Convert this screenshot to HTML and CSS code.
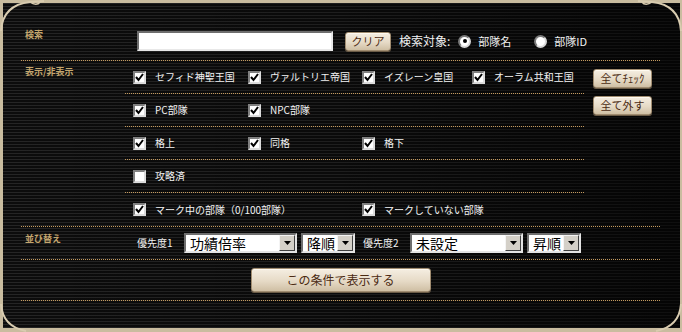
FILE: index.html
```html
<!DOCTYPE html>
<html lang="ja">
<head>
<meta charset="utf-8">
<title>検索</title>
<link rel="stylesheet" href="styles.css">
</head>
<body>
<div class="frame">
  <svg class="corner corner-tl" width="48" height="32" viewBox="0 0 48 32"><path d="M1 31 C2 14 12 4 30 2 L44 1" fill="none" stroke="#d9ccb0" stroke-width="2"/><path d="M30 2 C34 5 38 5 40 2" fill="none" stroke="#d9ccb0" stroke-width="1.5"/></svg>
  <svg class="corner corner-tr" width="48" height="32" viewBox="0 0 48 32"><path d="M47 31 C46 14 36 4 18 2 L4 1" fill="none" stroke="#d9ccb0" stroke-width="2"/><path d="M18 2 C14 5 10 5 8 2" fill="none" stroke="#d9ccb0" stroke-width="1.5"/></svg>
  <svg class="corner corner-bl" width="30" height="30" viewBox="0 0 30 30"><path d="M1 2 C2 16 10 26 26 29" fill="none" stroke="#d9ccb0" stroke-width="2"/></svg>
  <svg class="corner corner-br" width="30" height="30" viewBox="0 0 30 30"><path d="M29 2 C28 16 20 26 4 29" fill="none" stroke="#d9ccb0" stroke-width="2"/></svg>

  <section class="sec sec-search">
    <div class="sec-label">検索</div>
    <div class="search-body">
      <input class="text-input" type="text">
      <button class="btn btn-clear">クリア</button>
      <span class="target-label">検索対象:</span>
      <span class="radio"><span class="radio-dot on"></span>部隊名</span>
      <span class="radio radio-2"><span class="radio-dot"></span>部隊ID</span>
    </div>
  </section>

  <section class="sec sec-filter">
    <div class="sec-label">表示/非表示</div>
    <div class="rows">
      <div class="row">
        <span class="cb"><span class="box on"><svg width="9" height="9" viewBox="0 0 9 9"><path d="M1 4 L3.5 7 L8 1" fill="none" stroke="#000" stroke-width="2"/></svg></span>セフィド神聖王国</span>
        <span class="cb"><span class="box on"><svg width="9" height="9" viewBox="0 0 9 9"><path d="M1 4 L3.5 7 L8 1" fill="none" stroke="#000" stroke-width="2"/></svg></span>ヴァルトリエ帝国</span>
        <span class="cb"><span class="box on"><svg width="9" height="9" viewBox="0 0 9 9"><path d="M1 4 L3.5 7 L8 1" fill="none" stroke="#000" stroke-width="2"/></svg></span>イズレーン皇国</span>
        <span class="cb"><span class="box on"><svg width="9" height="9" viewBox="0 0 9 9"><path d="M1 4 L3.5 7 L8 1" fill="none" stroke="#000" stroke-width="2"/></svg></span>オーラム共和王国</span>
      </div>
      <div class="row">
        <span class="cb"><span class="box on"><svg width="9" height="9" viewBox="0 0 9 9"><path d="M1 4 L3.5 7 L8 1" fill="none" stroke="#000" stroke-width="2"/></svg></span>PC部隊</span>
        <span class="cb"><span class="box on"><svg width="9" height="9" viewBox="0 0 9 9"><path d="M1 4 L3.5 7 L8 1" fill="none" stroke="#000" stroke-width="2"/></svg></span>NPC部隊</span>
      </div>
      <div class="row">
        <span class="cb"><span class="box on"><svg width="9" height="9" viewBox="0 0 9 9"><path d="M1 4 L3.5 7 L8 1" fill="none" stroke="#000" stroke-width="2"/></svg></span>格上</span>
        <span class="cb"><span class="box on"><svg width="9" height="9" viewBox="0 0 9 9"><path d="M1 4 L3.5 7 L8 1" fill="none" stroke="#000" stroke-width="2"/></svg></span>同格</span>
        <span class="cb"><span class="box on"><svg width="9" height="9" viewBox="0 0 9 9"><path d="M1 4 L3.5 7 L8 1" fill="none" stroke="#000" stroke-width="2"/></svg></span>格下</span>
      </div>
      <div class="row">
        <span class="cb"><span class="box"></span>攻略済</span>
      </div>
      <div class="row row-last">
        <span class="cb"><span class="box on"><svg width="9" height="9" viewBox="0 0 9 9"><path d="M1 4 L3.5 7 L8 1" fill="none" stroke="#000" stroke-width="2"/></svg></span>マーク中の部隊（0/100部隊）</span>
        <span class="cb"><span class="box on"><svg width="9" height="9" viewBox="0 0 9 9"><path d="M1 4 L3.5 7 L8 1" fill="none" stroke="#000" stroke-width="2"/></svg></span>マークしていない部隊</span>
      </div>
    </div>
    <div class="side-btns">
      <button class="btn btn-side">全てﾁｪｯｸ</button>
      <button class="btn btn-side">全て外す</button>
    </div>
  </section>

  <section class="sec sec-sort">
    <div class="sec-label">並び替え</div>
    <div class="sort-body">
      <span class="prio">優先度1</span>
      <span class="select select-key"><span class="select-text">功績倍率</span><span class="arrow"><svg width="7" height="4" viewBox="0 0 7 4"><path d="M0 0 H7 L3.5 4 Z" fill="#000"/></svg></span></span>
      <span class="select select-order"><span class="select-text">降順</span><span class="arrow"><svg width="7" height="4" viewBox="0 0 7 4"><path d="M0 0 H7 L3.5 4 Z" fill="#000"/></svg></span></span>
      <span class="prio prio-2">優先度2</span>
      <span class="select select-key"><span class="select-text">未設定</span><span class="arrow"><svg width="7" height="4" viewBox="0 0 7 4"><path d="M0 0 H7 L3.5 4 Z" fill="#000"/></svg></span></span>
      <span class="select select-order"><span class="select-text">昇順</span><span class="arrow"><svg width="7" height="4" viewBox="0 0 7 4"><path d="M0 0 H7 L3.5 4 Z" fill="#000"/></svg></span></span>
    </div>
  </section>

  <section class="sec sec-submit">
    <button class="btn btn-submit">この条件で表示する</button>
  </section>
</div>
</body>
</html>
```

FILE: styles.css
```css
* { box-sizing: border-box; }
html, body { margin: 0; padding: 0; background: #000; }
body { width: 682px; height: 332px; overflow: hidden; }

.frame {
  position: relative;
  width: 682px;
  height: 332px;
  border-style: solid;
  border-color: #c9bc9f;
  border-width: 3px 2px 4px 3px;
  padding: 0 20px 0 18px;
  background:
    linear-gradient(to right, rgba(0,0,0,0) 0%, rgba(0,0,0,0.2) 50%, rgba(0,0,0,0.6) 100%),
    repeating-linear-gradient(to bottom, #252525 0, #252525 1px, #0c0c0c 1px, #0c0c0c 3px);
  font-family: "Noto Sans CJK JP", "Noto Sans", sans-serif;
  color: #f2f2f2;
}

.corner { position: absolute; }
.corner-tl { left: -3px; top: -3px; }
.corner-tr { right: -2px; top: -3px; }
.corner-bl { left: -3px; bottom: -4px; }
.corner-br { right: -2px; bottom: -4px; }

.sec {
  display: grid;
  grid-template-columns: 104px 1fr;
  border-bottom: 1px solid transparent;
  border-image: repeating-linear-gradient(to right, #c49a5e 0, #c49a5e 1px, transparent 1px, transparent 2px) 0 0 1 0;
}

.sec-label {
  padding-left: 4px;
  font-size: 9px;
  line-height: 11px;
  font-weight: bold;
  color: #c4a66e;
  white-space: nowrap;
}

/* search */
.sec-search { height: 58px; padding-top: 28px; align-items: start; }
.sec-search .sec-label { margin-top: -2px; }
.search-body { display: flex; align-items: center; padding-left: 12px; }
.text-input {
  width: 196px;
  height: 20px;
  margin: 0;
  padding: 0 3px;
  background: #fff;
  border-style: solid;
  border-width: 2px;
  border-color: #6e6e6e #e8e8e8 #e8e8e8 #6e6e6e;
  outline: none;
}

.btn {
  font-family: "Noto Sans CJK JP", "Noto Sans", sans-serif;
  color: #4a2a12;
  background: linear-gradient(to bottom, #f5eee2 0%, #e6dac6 55%, #cfbfa4 100%);
  border: 1px solid #a08c70;
  border-radius: 3px;
  box-shadow: inset 0 1px 0 #fffaf0, 0 1px 0 #6b5c47;
  padding: 0;
  margin: 0;
  cursor: pointer;
}
.btn-clear { width: 46px; height: 19px; margin-left: 12px; font-size: 11px; line-height: 17px; }
.target-label { margin-left: 8px; font-size: 12px; line-height: 14px; }
.radio { display: inline-flex; align-items: center; font-size: 11px; line-height: 13px; margin-left: 8px; }
.radio-2 { margin-left: 23px; }
.radio-dot {
  width: 13px; height: 13px;
  border-radius: 50%;
  background: #fff;
  border: 2px solid #7a7a7a;
  border-right-color: #d8d8d8;
  border-bottom-color: #d8d8d8;
  margin-right: 7px;
  display: inline-flex; align-items: center; justify-content: center;
}
.radio-dot.on::after {
  content: "";
  width: 4px; height: 4px;
  border-radius: 50%;
  background: #000;
}

/* filter */
.sec-filter { grid-template-columns: 104px 460px 1fr; }
.sec-filter .sec-label { padding-top: 5px; }
.rows { display: flex; flex-direction: column; }
.row {
  height: 33px;
  display: grid;
  grid-template-columns: 115px 114px 110px auto;
  align-items: center;
  padding-left: 8px;
  border-bottom: 1px solid transparent;
  border-image: repeating-linear-gradient(to right, #c49a5e 0, #c49a5e 1px, transparent 1px, transparent 2px) 0 0 1 0;
}
.row-last { border-bottom: none; border-image: none; grid-template-columns: 229px auto; }
.cb { display: inline-flex; align-items: center; font-size: 10px; line-height: 12px; white-space: nowrap; }
.box {
  width: 13px; height: 13px;
  background: #fff;
  border: 2px solid #808080;
  border-right-color: #dcdcdc;
  border-bottom-color: #dcdcdc;
  margin-right: 9px;
  display: inline-flex; align-items: center; justify-content: center;
  flex: none;
}
.side-btns { display: flex; flex-direction: column; gap: 8px; padding-left: 8px; padding-top: 8px; }
.btn-side { width: 59px; height: 19px; font-size: 11px; line-height: 17px; }

/* sort */
.sec-sort { height: 33px; }
.sec-sort .sec-label { padding-top: 6px; }
.sort-body { display: flex; align-items: center; padding-left: 12px; }
.prio { width: 47px; font-size: 10px; line-height: 12px; }
.prio-2 { margin-left: 8px; }
.select {
  height: 20px;
  display: flex; align-items: center;
  background: #fff;
  border-style: solid;
  border-width: 2px;
  border-color: #6e6e6e #e4e4e4 #e4e4e4 #6e6e6e;
  color: #000;
  padding-left: 4px;
}
.select-key { width: 113px; }
.select-order { width: 54px; margin-left: 4px; }
.select-text { flex: 1; font-size: 14px; line-height: 16px; white-space: nowrap; }
.arrow {
  width: 16px; height: 16px;
  background: #d4d0c8;
  border: 1px solid;
  border-color: #f4f4f4 #404040 #404040 #f4f4f4;
  display: flex; align-items: center; justify-content: center;
  flex: none;
}

/* submit */
.sec-submit { display: flex; justify-content: center; align-items: flex-start; height: 41px; padding-top: 8px; }
.btn-submit { width: 180px; height: 24px; font-size: 12px; line-height: 22px; }
```
